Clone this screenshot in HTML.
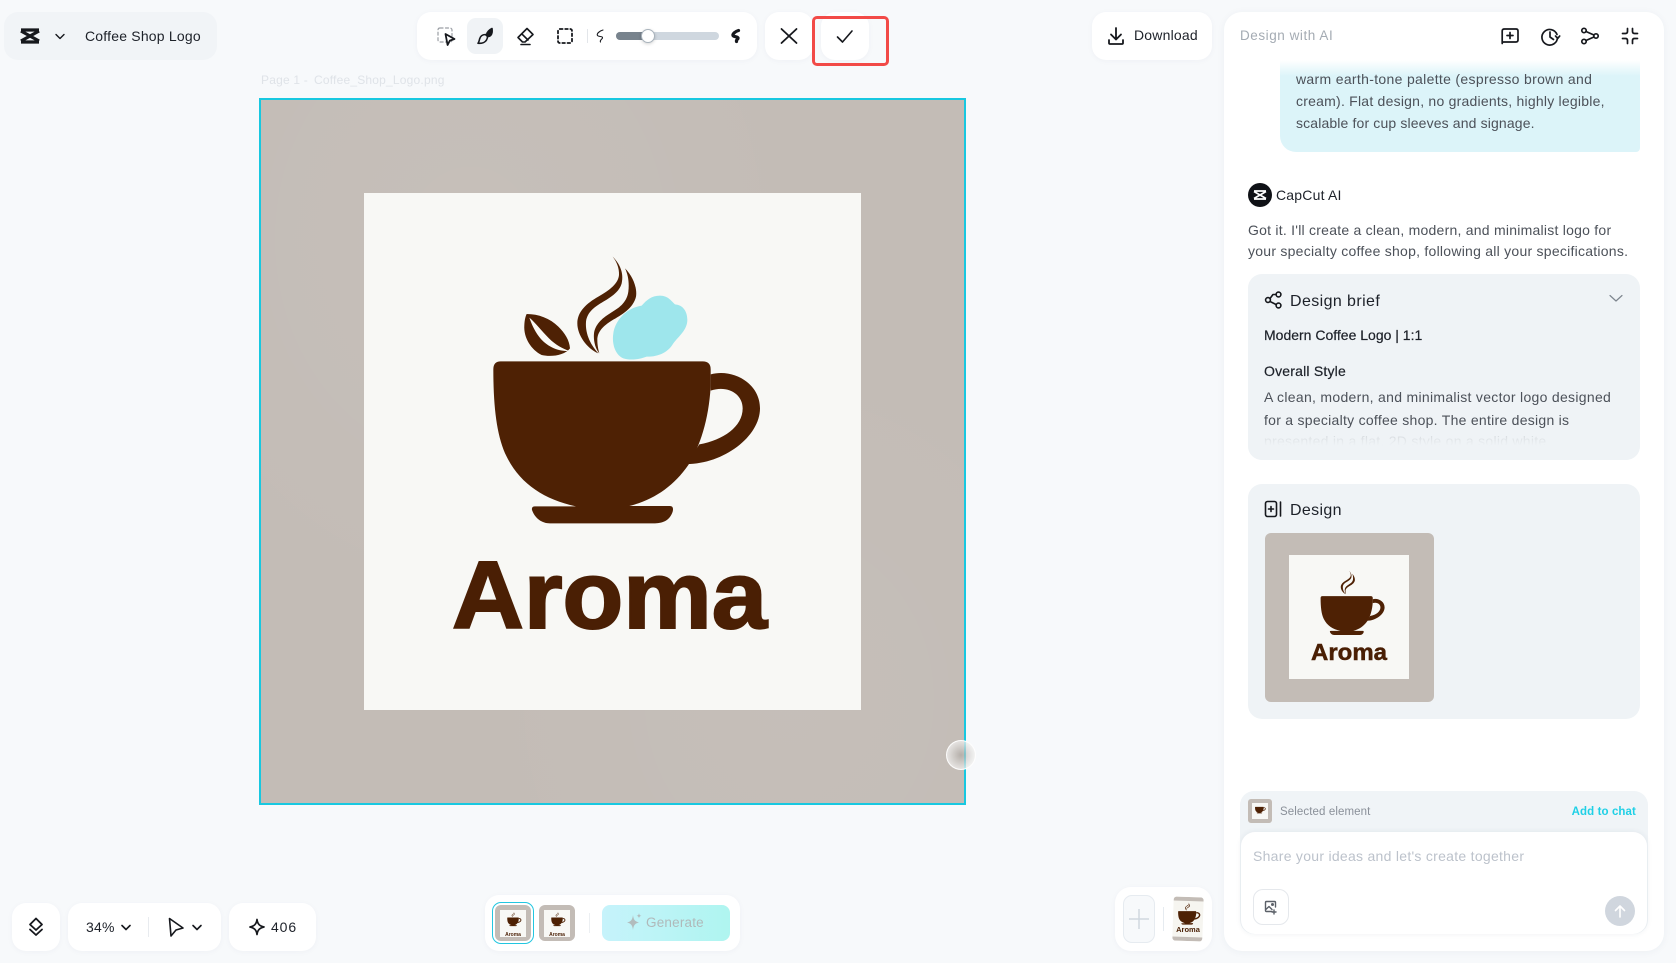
<!DOCTYPE html>
<html lang="en"><head><meta charset="utf-8"><title>Coffee Shop Logo</title>
<style>
html,body{margin:0;padding:0}
body{width:1676px;height:963px;position:relative;overflow:hidden;background:#f7f9fb;font-family:"Liberation Sans",sans-serif;color:#1d2129}
.a{position:absolute}
.t{position:absolute;white-space:nowrap;line-height:20px;font-size:14px;letter-spacing:.2px}
.p{position:absolute;background:#fff;border-radius:14px;box-shadow:0 1px 6px rgba(40,60,90,.04)}
svg.i{position:absolute;width:24px;height:24px;fill:none;stroke:#16181d;stroke-width:1.6;stroke-linecap:round;stroke-linejoin:round;overflow:visible}
.b{color:#4c5159;letter-spacing:.27px}
</style></head><body>
<svg width="0" height="0" style="position:absolute">
<symbol id="cup" viewBox="0 0 960 900">
<path fill="#4e2104" d="M92 364H698Q722 364 722 388L722 440C716 540 690 620 655 675C610 740 550 780 478 798H600Q612 798 608 815C600 840 580 850 555 850H240C215 850 195 835 186 810Q184 799 195 799H318C220 778 150 730 110 650C80 590 70 500 70 388Q70 364 92 364Z"/>
<path fill="#4e2104" d="M722 403C790 385 870 430 870 505C870 590 760 672 650 672L688 613C760 600 818 560 818 505C818 460 770 435 722 452Z"/>
</symbol>
<symbol id="steam" viewBox="0 0 960 900">
<path fill="#4e2104" d="M428 50C450 72 462 100 455 130C448 155 425 170 400 185C375 200 352 215 348 245C345 285 365 318 385 340C350 325 322 285 322 250C322 215 350 190 385 170C420 150 445 130 447 105C448 85 440 65 428 50Z"/>
<path fill="#4e2104" d="M465 85C490 110 502 145 498 170C490 205 455 225 425 242C400 258 382 275 382 300C382 315 385 330 388 340C375 325 370 300 372 280C375 255 395 235 420 220C445 205 470 190 475 155C478 130 475 105 465 85Z"/>
</symbol>
</svg>

<!-- Logo panel -->
<div class="a" style="left:4px;top:12px;width:213px;height:48px;border-radius:14px;background:#f1f4f7"></div>
<svg class="a" style="left:0;top:0;overflow:visible" width="60" height="60" fill="none" stroke="#16181d"><path d="M21 30H39M21 42H39M21 31L39 41M39 31L21 41" stroke-width="3.2"/></svg>
<svg class="i" style="left:48px;top:24px;stroke-width:1.4"><path d="M8 10.5L12 14.5L16 10.5"/></svg>
<div class="t" style="left:85px;top:26px">Coffee Shop Logo</div>
<div class="t" style="left:261px;top:70px;font-size:12px;color:#dfe3e8">Page 1 -</div>
<div class="t" style="left:314px;top:70px;font-size:12px;color:#dfe3e8">Coffee_Shop_Logo.png</div>

<!-- Toolbar -->
<div class="p" style="left:417px;top:12px;width:340px;height:48px"></div>
<div class="a" style="left:467px;top:18px;width:36px;height:36px;border-radius:9px;background:#f0f3f6"></div>
<svg class="i" style="left:433.5px;top:24px"><rect x="4" y="4" width="14" height="14" rx="2" stroke="#9a9ea4" stroke-width="1.2" stroke-dasharray="3 2.5"/><path d="M11.5 10L20.5 15L15.8 16.6L13.6 21Z" fill="#fff" stroke-width="1.8"/></svg>
<svg class="i" style="left:473px;top:24px"><path d="M19 4.5C16 6 14.2 8 13.6 10.5L15.6 12.5C18.2 11.8 19.6 9 19 4.5Z" fill="#16181d"/><path d="M12.5 10.5C9.2 10.6 7.2 12.6 6.6 15C6.3 16.5 6 18 5 19.2C8.5 19.6 12 18.5 13.5 16C14.4 14.5 14.6 13.2 14.5 12.4Z"/></svg>
<svg class="i" style="left:512.5px;top:24px"><path d="M14 4.5L20 10.5L12 18H9.5L5 13.5Z M8.7 9.8L15 16 M8 20.5H17"/></svg>
<svg class="i" style="left:553px;top:24px"><rect x="5" y="5" width="14" height="14" rx="2" stroke-width="1.8" stroke-dasharray="2.6 2.6"/></svg>
<div class="a" style="left:587px;top:29px;width:1px;height:14px;background:#e3e6ea"></div>
<svg class="i" style="left:588px;top:24px;stroke-width:1.1"><path d="M15 6C11 7 8.5 10 9.5 11.5C10.5 13 15 12 14.5 14C14 15.5 11.5 16 12.5 18"/></svg>
<div class="a" style="left:616px;top:32px;width:103px;height:8px;border-radius:4px;background:#cfd7df"></div>
<div class="a" style="left:616px;top:32px;width:32px;height:8px;border-radius:4px 0 0 4px;background:#78838d"></div>
<div class="a" style="left:641px;top:29px;width:12px;height:12px;border-radius:50%;background:#fff;border:1px solid #a9b3bc;box-shadow:0 1px 3px rgba(0,0,0,.18)"></div>
<svg class="i" style="left:723px;top:24px;stroke-width:3.2"><path d="M15.5 6.5C12 7.5 9.5 10 10 11.5C10.5 13 15.5 12.5 15 14.5C14.5 15.5 13 16 13.5 17.5"/></svg>
<div class="p" style="left:765px;top:12px;width:48px;height:48px"></div>
<svg class="i" style="left:777px;top:24px;stroke-width:1.8"><path d="M4.5 5L19.5 19M19.5 5L4.5 19"/></svg>
<div class="p" style="left:821px;top:12px;width:48px;height:48px"></div>
<svg class="i" style="left:833px;top:24px"><path d="M4.5 13L9.5 18L19 7"/></svg>
<div class="a" style="left:812px;top:16px;width:77px;height:50px;box-sizing:border-box;border:3px solid #f24a47;border-radius:5px"></div>

<!-- Download -->
<div class="p" style="left:1092px;top:12px;width:120px;height:48px"></div>
<svg class="i" style="left:1103.5px;top:24px;stroke-width:1.8"><path d="M12 4V15M7 10.5L12 15.5L17 10.5M5 16V19Q5 20 6 20H18Q19 20 19 19V16" /></svg>
<div class="t" style="left:1134px;top:25px">Download</div>

<!-- Canvas -->
<div class="a" style="left:258.5px;top:98px;width:707px;height:707px;box-sizing:border-box;border:2px solid #18c8e0;background:#c3bcb6;overflow:hidden">
  <div class="a" style="left:-2px;top:-2px;width:707px;height:707px;background:radial-gradient(ellipse at 30% 20%,rgba(255,255,255,.05),transparent 50%),radial-gradient(ellipse at 75% 85%,rgba(255,255,255,.04),transparent 45%)"></div>
</div>
<div class="a" style="left:363.5px;top:193px;width:497px;height:517px;background:#f8f8f5"></div>
<svg class="a" style="left:470px;top:240px" width="320" height="300" viewBox="0 0 960 900">
  <use href="#cup" width="960" height="900"/>
  <use href="#steam" width="960" height="900"/>
  <path fill="#4e2104" d="M170 222C205 222 240 235 265 260C285 280 298 300 300 325C285 345 245 352 215 345C185 330 160 295 163 255C164 240 166 230 170 222Z"/>
  <path fill="#fafaf7" d="M178 233C198 250 212 270 237 295C257 315 277 325 298 333C265 335 230 320 207 290C192 270 184 250 178 233Z"/>
  <path fill="#9ee6ec" d="M570 167C595 167 605 185 615 193C640 195 652 215 652 240C652 270 625 290 610 310C595 335 570 350 530 350C510 358 480 362 460 355C435 345 425 310 430 280C435 245 465 205 515 197C530 180 545 167 570 167Z"/>
</svg>
<svg class="a" style="left:440px;top:540px" width="340" height="100"><text x="12" y="88" font-family="Liberation Sans" font-weight="700" font-size="96" fill="#4a1f04" stroke="#4a1f04" stroke-width="2" textLength="315" lengthAdjust="spacingAndGlyphs">Aroma</text></svg>
<div class="a" style="left:946px;top:740px;width:30px;height:30px;border-radius:50%;box-sizing:border-box;border:1.5px solid rgba(255,255,255,.9);background:radial-gradient(circle,rgba(170,165,160,.6),rgba(255,255,255,.8) 90%)"></div>

<!-- AI panel -->
<div class="a" style="left:1224px;top:12px;width:440px;height:939px;background:#fff;border-radius:18px;box-shadow:0 1px 8px rgba(40,60,90,.05)"></div>
<div class="t" style="left:1240px;top:26px;color:#a4abb3;font-size:13.5px;letter-spacing:.55px">Design with AI</div>
<svg class="i" style="left:1498px;top:24px;stroke-width:1.7"><path d="M6.5 5H18Q20 5 20 7V16Q20 18 18 18H5.5Q4.2 18 4.2 19.5V7Q4.2 5 6.5 5ZM12 8.5V14.5M9 11.5H15"/></svg>
<svg class="i" style="left:1538px;top:24px;stroke-width:1.7"><path d="M19 10.5A7.8 7.8 0 1 0 19.5 13.5M12 8V13L15.5 15.5M17.5 12L19.7 14.5L21.7 12"/></svg>
<svg class="i" style="left:1577px;top:24px;stroke-width:1.7"><circle cx="7" cy="6.5" r="2.2"/><circle cx="7" cy="17.5" r="2.2"/><circle cx="19" cy="12" r="2.2"/><path d="M9 7.5L16.9 11M9 16.5L16.9 13"/></svg>
<svg class="i" style="left:1618px;top:24px;stroke-width:1.7"><path d="M9.5 4.5V7.5Q9.5 9.5 7.5 9.5H4.5M14.5 4.5V7.5Q14.5 9.5 16.5 9.5H19.5M9.5 19.5V16.5Q9.5 14.5 7.5 14.5H4.5M14.5 19.5V16.5Q14.5 14.5 16.5 14.5H19.5"/></svg>

<div class="a" style="left:1280px;top:60px;width:360px;height:92px;border-radius:0 0 4px 16px;background:linear-gradient(#fff 0,#dcf4f9 16px)"></div>
<div class="t b" style="left:1296px;top:69px;letter-spacing:.32px">warm earth-tone palette (espresso brown and</div>
<div class="t b" style="left:1296px;top:91px;letter-spacing:.23px">cream). Flat design, no gradients, highly legible,</div>
<div class="t b" style="left:1296px;top:113px;letter-spacing:.14px">scalable for cup sleeves and signage.</div>

<div class="a" style="left:1248px;top:183px;width:24px;height:24px;border-radius:50%;background:#0f1116"></div>
<svg class="a" style="left:1248px;top:183px" width="24" height="24" fill="none" stroke="#fff" stroke-width="1.7"><path d="M6 8H18M6 16H18M6 8.5L18 15.5M18 8.5L6 15.5"/></svg>
<div class="t" style="left:1276px;top:185px">CapCut AI</div>
<div class="t b" style="left:1248px;top:220px;letter-spacing:.24px">Got it. I'll create a clean, modern, and minimalist logo for</div>
<div class="t b" style="left:1248px;top:241px;letter-spacing:.25px">your specialty coffee shop, following all your specifications.</div>

<!-- Design brief -->
<div class="a" style="left:1248px;top:274px;width:392px;height:186px;border-radius:14px;background:#eff3f6;overflow:hidden">
  <div class="t b" style="left:16px;top:157px">presented in a flat, 2D style on a solid white</div>
  <div class="a" style="left:0;top:150px;width:392px;height:36px;background:linear-gradient(rgba(239,243,246,.7),#eff3f6 60%)"></div>
</div>
<svg class="i" style="left:1261px;top:288px;stroke-width:1.6"><circle cx="7" cy="12" r="2.4"/><circle cx="17.5" cy="6.5" r="2.4"/><circle cx="17.5" cy="17.5" r="2.4"/><path d="M9 10.5L12 6.5H15M9 13.5L15.3 16.6"/></svg>
<div class="t" style="left:1290px;top:291px;font-size:16px;letter-spacing:.4px;line-height:22px">Design brief</div>
<svg class="i" style="left:1604px;top:287px;stroke:#7d858e;stroke-width:1.2"><path d="M6 8.5L12 14L18 8.5"/></svg>
<div class="t" style="left:1264px;top:325px;letter-spacing:0;-webkit-text-stroke:.2px #1d2129">Modern Coffee Logo | 1:1</div>
<div class="t" style="left:1264px;top:361px;-webkit-text-stroke:.2px #1d2129">Overall Style</div>
<div class="t b" style="left:1264px;top:387px;letter-spacing:.3px">A clean, modern, and minimalist vector logo designed</div>
<div class="t b" style="left:1264px;top:410px">for a specialty coffee shop. The entire design is</div>

<!-- Design -->
<div class="a" style="left:1248px;top:484px;width:392px;height:235px;border-radius:14px;background:#eff3f6"></div>
<svg class="i" style="left:1261px;top:497px;stroke-width:1.6"><rect x="4.5" y="4.5" width="11" height="15" rx="2"/><path d="M10 9.5V14.5M7.5 12H12.5M19.5 5V19"/></svg>
<div class="t" style="left:1290px;top:500px;font-size:16px;letter-spacing:.35px;line-height:22px">Design</div>
<div class="a" style="left:1265px;top:533px;width:169px;height:169px;border-radius:6px;background:#c3bcb6"></div>
<div class="a" style="left:1289px;top:555px;width:120px;height:124px;background:#f8f8f5"></div>
<svg class="a" style="left:1315px;top:566.7px" width="76.8" height="72"><use href="#cup" width="76.8" height="72"/><use href="#steam" width="76.8" height="72"/></svg>
<svg class="a" style="left:1305px;top:640px" width="90" height="26"><text x="6" y="20" font-family="Liberation Sans" font-weight="700" font-size="23" fill="#4a1f04" stroke="#4a1f04" stroke-width=".5" textLength="76" lengthAdjust="spacingAndGlyphs">Aroma</text></svg>

<!-- Input -->
<div class="a" style="left:1240px;top:791px;width:408px;height:143px;border-radius:14px;background:#f0f4f7"></div>
<div class="a" style="left:1248px;top:799px;width:24px;height:24px;border-radius:3px;background:#c3bcb6"></div>
<div class="a" style="left:1252px;top:803px;width:16px;height:16px;background:#f8f8f5"></div>
<svg class="a" style="left:1253.5px;top:802px" width="13" height="12"><use href="#cup" width="13" height="12"/></svg>
<div class="t" style="left:1280px;top:802px;font-size:11.5px;color:#8a9099;letter-spacing:.1px">Selected element</div>
<div class="t" style="right:40px;top:802px;font-size:11.5px;font-weight:700;color:#1fd0e6;letter-spacing:.1px">Add to chat</div>
<div class="a" style="left:1241px;top:832px;width:406px;height:102px;background:#fff;border-radius:14px;box-shadow:0 0 6px rgba(40,60,90,.08)"></div>
<div class="t" style="left:1253px;top:846px;color:#bcc2cb;letter-spacing:.28px">Share your ideas and let's create together</div>
<div class="a" style="left:1253px;top:889px;width:36px;height:36px;box-sizing:border-box;border:1px solid #e5e8ec;border-radius:10px"></div>
<svg class="i" style="left:1259px;top:895px;stroke:#5b6068;stroke-width:1.4"><path d="M16.5 12V7.5Q16.5 6.5 15.5 6.5H7.5Q6.5 6.5 6.5 7.5V15.5Q6.5 16.5 7.5 16.5H13M6.8 14.5L10 11.5L13 14.5M15 15V19M13 17H17"/><circle cx="13.5" cy="9.5" r=".8" fill="#5b6068"/></svg>
<div class="a" style="left:1605px;top:896px;width:30px;height:30px;border-radius:50%;background:#d0d6de"></div>
<svg class="i" style="left:1608px;top:899px;stroke:#fff;stroke-width:1.6"><path d="M12 18V7M7.5 11.5L12 7L16.5 11.5"/></svg>

<!-- Bottom left -->
<div class="p" style="left:12px;top:903px;width:48px;height:48px"></div>
<svg class="i" style="left:24px;top:915px;stroke-width:1.8"><path d="M12 3.5L18 9.5L12 15L6 9.5ZM6 14.5L12 20L18 14.5"/></svg>
<div class="p" style="left:68px;top:903px;width:153px;height:48px"></div>
<div class="t" style="left:86px;top:917px">34%</div>
<svg class="i" style="left:114px;top:915px"><path d="M8 10.5L12 14.5L16 10.5"/></svg>
<div class="a" style="left:148px;top:917px;width:1px;height:20px;background:#e8ebef"></div>
<svg class="i" style="left:163px;top:915px;stroke-width:1.6"><path d="M6.5 3.5L20 13L13 15L8 21Z"/></svg>
<svg class="i" style="left:185px;top:915px"><path d="M8 10.5L12 14.5L16 10.5"/></svg>
<div class="p" style="left:229px;top:903px;width:87px;height:48px"></div>
<svg class="i" style="left:245px;top:915px;stroke-width:1.7"><path d="M12 4.5C12.6 9 14.5 11 19 12C14.5 13 12.6 15 12 19.5C11.4 15 9.5 13 5 12C9.5 11 11.4 9 12 4.5Z"/></svg>
<div class="t" style="left:271px;top:917px;letter-spacing:.9px">406</div>

<!-- Generate -->
<div class="p" style="left:485px;top:895px;width:255px;height:56px"></div>
<div class="a" style="left:492px;top:902px;width:42px;height:42px;box-sizing:border-box;border:1.5px solid #22c6e0;border-radius:9px;background:#fff"></div>
<div class="a" style="left:495px;top:905px;width:36px;height:36px;border-radius:6px;background:#c3bcb6"></div>
<div class="a" style="left:500px;top:910px;width:26px;height:27px;background:#f8f8f5"></div>
<svg class="a" style="left:505.5px;top:911px" width="17" height="16"><use href="#cup" width="17" height="16"/><use href="#steam" width="17" height="16"/></svg>
<div class="t" style="left:500px;top:925px;width:26px;text-align:center;font-size:5px;font-weight:700;color:#4a1f04;letter-spacing:0">Aroma</div>
<div class="a" style="left:539px;top:905px;width:36px;height:36px;border-radius:6px;background:#c3bcb6"></div>
<div class="a" style="left:544px;top:910px;width:26px;height:27px;background:#f8f8f5"></div>
<svg class="a" style="left:549.5px;top:911px" width="17" height="16"><use href="#cup" width="17" height="16"/><use href="#steam" width="17" height="16"/></svg>
<div class="t" style="left:544px;top:925px;width:26px;text-align:center;font-size:5px;font-weight:700;color:#4a1f04;letter-spacing:0">Aroma</div>
<div class="a" style="left:589px;top:913px;width:1px;height:20px;background:#eceff2"></div>
<div class="a" style="left:602px;top:905px;width:128px;height:36px;border-radius:8px;background:linear-gradient(90deg,#c6f3fb,#aff5f0)"></div>
<svg class="a" style="left:625px;top:912px" width="18" height="20" fill="#b2bcbd"><path d="M8 3C8.6 8 10 9.5 14 10.5C10 11.5 8.6 13 8 18C7.4 13 6 11.5 2 10.5C6 9.5 7.4 8 8 3Z"/><path d="M14 1C14.2 2.8 14.8 3.4 16.5 3.8C14.8 4.2 14.2 4.8 14 6.5C13.8 4.8 13.2 4.2 11.5 3.8C13.2 3.4 13.8 2.8 14 1Z"/></svg>
<div class="t" style="left:646px;top:913px;color:#b0b9ba;font-size:13.5px">Generate</div>

<!-- Bottom right mini panel -->
<div class="p" style="left:1115px;top:887px;width:97px;height:64px;border-radius:16px"></div>
<div class="a" style="left:1123px;top:895px;width:32px;height:48px;box-sizing:border-box;border:1px solid #e6ebf0;border-radius:9px;background:#f7f9fb"></div>
<svg class="a" style="left:1129px;top:909px" width="20" height="20" stroke="#d0d8e0" stroke-width="1.5"><path d="M10 0V20M0 10H20"/></svg>
<div class="a" style="left:1163px;top:907px;width:1px;height:24px;background:#e6ebf0"></div>
<div class="a" style="left:1173px;top:897px;width:30px;height:44px;border-radius:3px;background:#f6f5f0;overflow:hidden;transform:rotate(2deg)">
  <div class="a" style="left:0;top:0;width:30px;height:4px;background:#c3bcb6"></div>
  <div class="a" style="left:0;bottom:0;width:30px;height:4px;background:#c3bcb6"></div>
</div>
<svg class="a" style="left:1175.5px;top:901px" width="27" height="25" viewBox="0 0 960 900"><use href="#cup" width="960" height="900"/><use href="#steam" width="960" height="900"/></svg>
<div class="t" style="left:1173px;top:920px;width:30px;text-align:center;font-size:7.5px;font-weight:700;color:#4a1f04;letter-spacing:0">Aroma</div>
</body></html>
